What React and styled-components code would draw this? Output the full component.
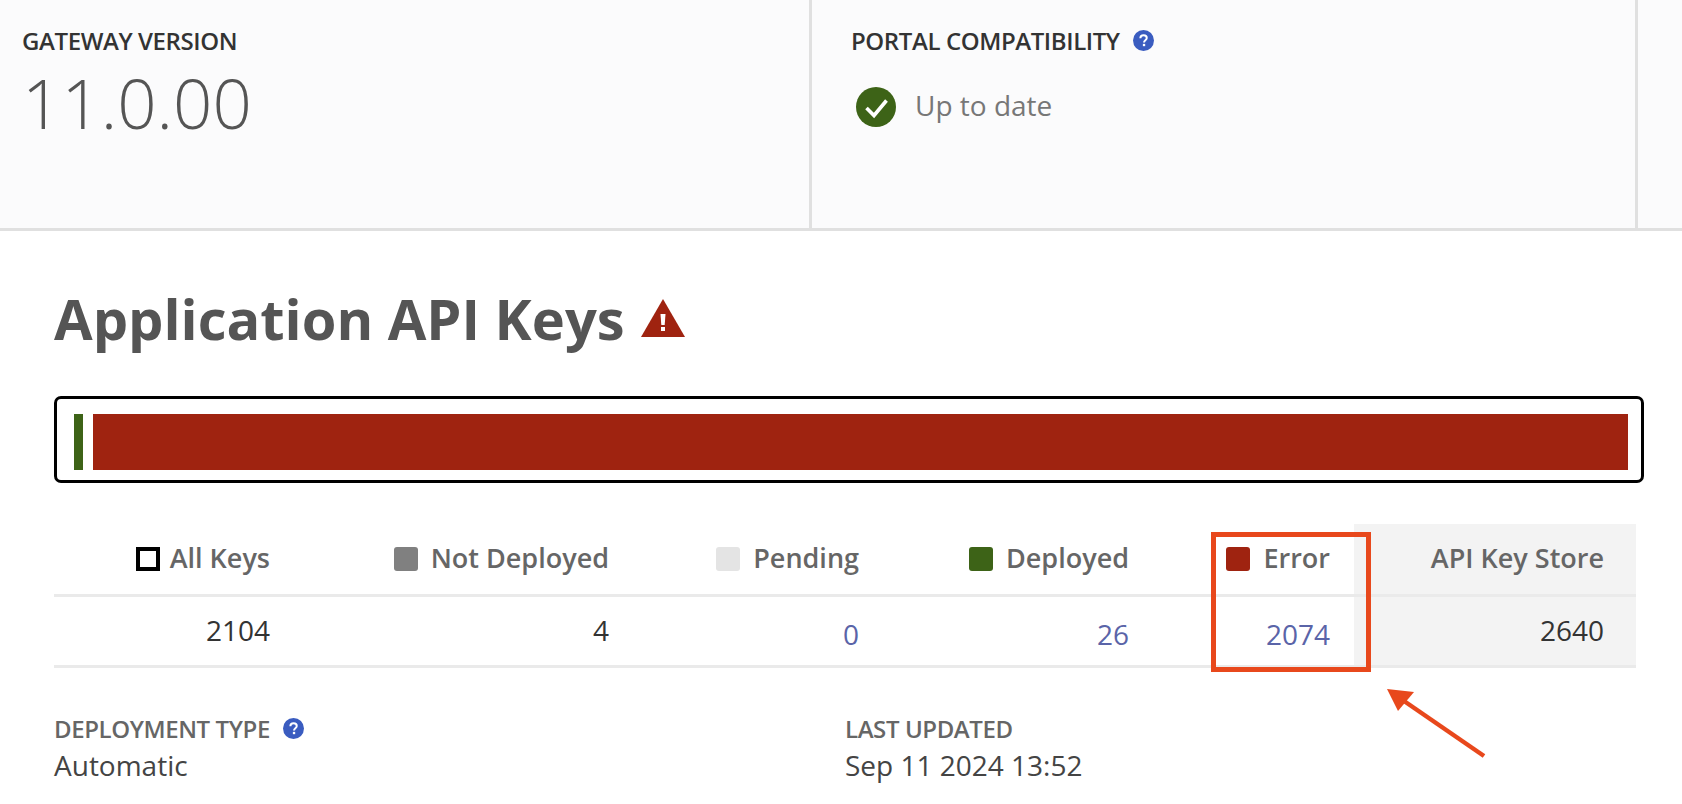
import React from 'react';
import styled, { createGlobalStyle } from 'styled-components';

const GlobalStyle = createGlobalStyle`
  html, body {
    margin: 0;
    padding: 0;
    background: #fff;
    overflow: hidden;
  }
  body {
    font-family: "Open Sans", "Noto Sans", sans-serif;
    color: #555;
  }
`;

const Page = styled.div`
  position: relative;
  width: 1682px;
  height: 804px;
  overflow: hidden;
`;

const TopBar = styled.div`
  display: grid;
  grid-template-columns: 812px 826px 1fr;
  height: 228px;
  background: #fbfbfc;
  border-bottom: 3px solid #e0e0e0;
`;

const TopCell = styled.div`
  padding: 27px 0 0 ${(p) => p.$pad || 22}px;
  border-right: ${(p) => (p.$last ? 'none' : '3px solid #e0e0e0')};
  box-sizing: border-box;
`;

const TopLabel = styled.div`
  display: flex;
  align-items: center;
  gap: 13px;
  font-size: 24px;
  line-height: 27px;
  font-weight: 600;
  letter-spacing: -0.4px;
  color: #333;
`;

const Version = styled.div`
  margin-top: 3px;
  font-size: 69px;
  line-height: 90px;
  font-weight: 300;
  color: #555;
`;

const StatusRow = styled.div`
  display: flex;
  align-items: center;
  gap: 19px;
  margin: 32px 0 0 5px;
  font-size: 28px;
  color: #777;
`;

const StatusText = styled.span`
  padding-bottom: 3px;
`;

const Content = styled.div`
  padding: 0 46px 0 54px;
`;

const Heading = styled.h1`
  display: flex;
  align-items: center;
  gap: 16px;
  margin: 51px 0 0;
  font-size: 56px;
  line-height: 72px;
  font-weight: 700;
  color: #555;
`;

const BarFrame = styled.div`
  display: flex;
  gap: 10px;
  box-sizing: border-box;
  height: 87px;
  margin: 42px -8px 0 0;
  padding: 15px 13px 10px 17px;
  border: 3px solid #000;
  border-radius: 7px;
  background: #fff;
`;

const BarPart = styled.div`
  background: ${(p) => p.$color};
  flex: ${(p) => (p.$grow ? '1' : 'none')};
  width: ${(p) => p.$width || 0}px;
`;

const Table = styled.div`
  display: grid;
  grid-template-columns: 240px 339px 250px 270px 201px 282px;
  margin-top: 41px;
`;

const HeadCell = styled.div`
  display: flex;
  align-items: center;
  justify-content: flex-end;
  gap: 13px;
  height: 70px;
  box-sizing: content-box;
  padding: 0 ${(p) => (p.$store ? 32 : 24)}px 0 0;
  background: ${(p) => (p.$store ? '#f3f3f3' : 'transparent')};
  border-bottom: 3px solid #eaeaea;
  font-size: 27px;
  font-weight: 600;
  color: #666;
`;

const HeadLabel = styled.span`
  padding-bottom: 3px;
`;

const ValueCell = styled.div`
  display: flex;
  align-items: center;
  justify-content: flex-end;
  height: 71px;
  padding: ${(p) => (p.$link ? '5px' : '0')} ${(p) => (p.$store ? 32 : 24)}px ${(p) => (p.$link ? '0' : '3px')} 0;
  box-sizing: border-box;
  background: ${(p) => (p.$store ? '#f3f3f3' : 'transparent')};
  border-bottom: 3px solid #eaeaea;
  font-size: 28px;
  color: ${(p) => (p.$link ? '#5a64a8' : '#333')};
`;

const Swatch = styled.span`
  width: 24px;
  height: 24px;
  box-sizing: border-box;
  margin-right: ${(p) => (p.$outline ? -3 : 0)}px;
  border-radius: ${(p) => (p.$outline ? 0 : 3)}px;
  background: ${(p) => p.$color || '#fff'};
  border: ${(p) => (p.$outline ? '4px solid #000' : 'none')};
`;

const MetaRow = styled.div`
  display: grid;
  grid-template-columns: 791px 1fr;
  margin-top: 47px;
`;

const MetaLabel = styled.div`
  display: flex;
  align-items: center;
  gap: 13px;
  font-size: 24px;
  line-height: 27px;
  font-weight: 600;
  letter-spacing: -0.4px;
  color: #666;
`;

const MetaValue = styled.div`
  margin-top: 4px;
  font-size: 28px;
  line-height: 38px;
  color: #444;
`;

const Callout = styled.div`
  position: absolute;
  left: 1211px;
  top: 532px;
  width: 160px;
  height: 140px;
  box-sizing: border-box;
  border: 5px solid #e8481c;
`;

const ArrowSvg = styled.svg`
  position: absolute;
  left: 1380px;
  top: 684px;
`;

const Help = ({ size = 21 }) => (
  <svg width={size} height={size} viewBox="0 0 20 20">
    <circle cx="10" cy="10" r="10" fill="#3a5cc0" />
    <path d="M7 7.8c0-1.8 1.4-2.9 3.1-2.9 1.7 0 3 1 3 2.6 0 2.2-2.6 2.2-2.6 4.3" fill="none" stroke="#fff" strokeWidth="1.9" />
    <rect x="9.4" y="13.2" width="2.2" height="2.2" fill="#fff" />
  </svg>
);

const Check = () => (
  <svg width="40" height="40" viewBox="0 0 40 40">
    <circle cx="20" cy="20" r="20" fill="#3d6317" />
    <path d="M10.5 21l7.5 7.5L30.5 13.5" fill="none" stroke="#fff" strokeWidth="3.6" />
  </svg>
);

const Warning = () => (
  <svg width="44" height="38" viewBox="0 0 44 38">
    <path d="M22 0L44 38H0z" fill="#9f2310" />
    <path d="M19.5 15h5l-.8 11h-3.4z" fill="#fff" />
    <rect x="20" y="28" width="4" height="4" fill="#fff" />
  </svg>
);

const columns = [
  { label: 'All Keys', value: '2104', outline: true },
  { label: 'Not Deployed', value: '4', color: '#808080' },
  { label: 'Pending', value: '0', color: '#e4e4e4', link: true },
  { label: 'Deployed', value: '26', color: '#3d6317', link: true },
  { label: 'Error', value: '2074', color: '#9f2310', link: true },
  { label: 'API Key Store', value: '2640', store: true },
];

export default function App() {
  return (
    <Page>
      <GlobalStyle />
      <TopBar>
        <TopCell>
          <TopLabel>GATEWAY VERSION</TopLabel>
          <Version>11.0.00</Version>
        </TopCell>
        <TopCell $pad={39}>
          <TopLabel>PORTAL COMPATIBILITY <Help /></TopLabel>
          <StatusRow><Check /> <StatusText>Up to date</StatusText></StatusRow>
        </TopCell>
        <TopCell $last />
      </TopBar>
      <Content>
        <Heading>Application API Keys <Warning /></Heading>
        <BarFrame>
          <BarPart $color="#3d6317" $width={9} />
          <BarPart $color="#9f2310" $grow />
        </BarFrame>
        <Table>
          {columns.map((c) => (
            <HeadCell key={c.label} $store={c.store}>
              {!c.store && <Swatch $color={c.color} $outline={c.outline} />}
              <HeadLabel>{c.label}</HeadLabel>
            </HeadCell>
          ))}
          {columns.map((c) => (
            <ValueCell key={c.label} $store={c.store} $link={c.link}>{c.value}</ValueCell>
          ))}
        </Table>
        <MetaRow>
          <div>
            <MetaLabel>DEPLOYMENT TYPE <Help /></MetaLabel>
            <MetaValue>Automatic</MetaValue>
          </div>
          <div>
            <MetaLabel>LAST UPDATED</MetaLabel>
            <MetaValue>Sep 11 2024 13:52</MetaValue>
          </div>
        </MetaRow>
      </Content>
      <Callout />
      <ArrowSvg width="110" height="80" viewBox="0 0 110 80">
        <path d="M7 5L34 8 18 27z" fill="#e8481c" />
        <path d="M24 17L104 72" stroke="#e8481c" strokeWidth="4.5" />
      </ArrowSvg>
    </Page>
  );
}
